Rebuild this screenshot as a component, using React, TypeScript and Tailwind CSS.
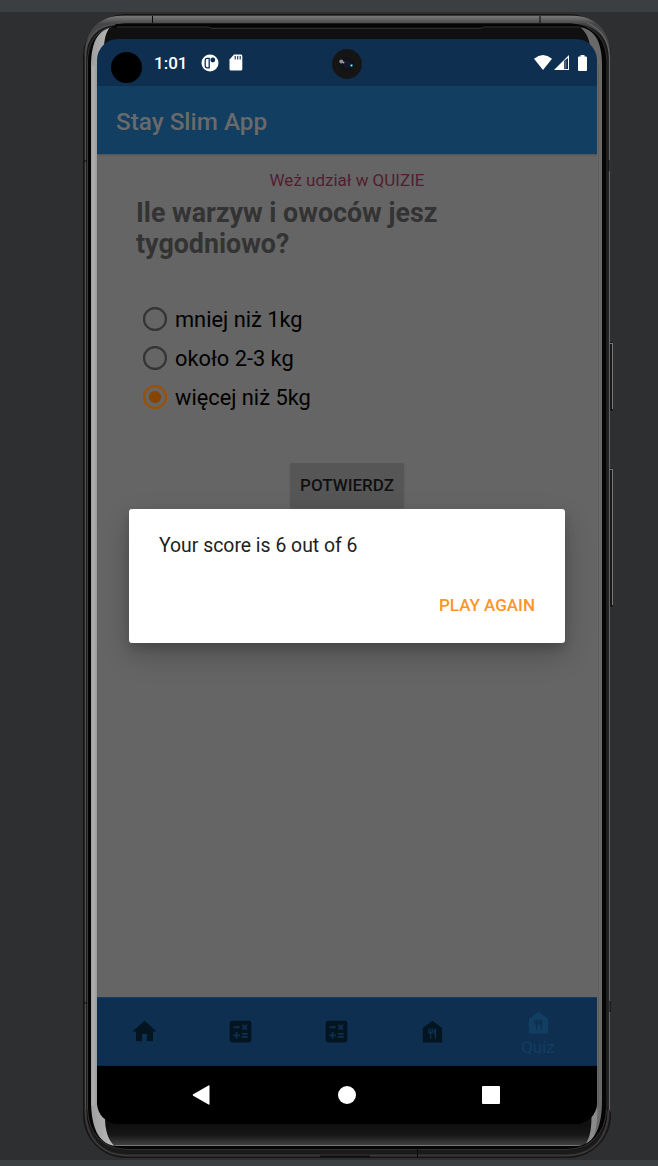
import { MdCalculate, MdFoodBank, MdHome } from "react-icons/md";

const answers = [
  { label: "mniej niż 1kg", selected: false },
  { label: "około 2-3 kg", selected: false },
  { label: "więcej niż 5kg", selected: true },
];

function PhoneFrame() {
  return (
    <svg className="absolute inset-0" width="658" height="1166" viewBox="0 0 658 1166" fill="none" aria-hidden="true">
      <defs>
        <linearGradient id="topMetal" x1="0" y1="14" x2="0" y2="24" gradientUnits="userSpaceOnUse">
          <stop offset="0" stopColor="#2a2625" />
          <stop offset="0.25" stopColor="#757575" />
          <stop offset="1" stopColor="#454545" />
        </linearGradient>
        <linearGradient id="bottomGlass" x1="0" y1="1124" x2="0" y2="1146" gradientUnits="userSpaceOnUse">
          <stop offset="0" stopColor="#0e0e0e" />
          <stop offset="0.5" stopColor="#171717" />
          <stop offset="1" stopColor="#444444" />
        </linearGradient>
        <linearGradient id="leftGlow" x1="91" y1="0" x2="97" y2="0" gradientUnits="userSpaceOnUse">
          <stop offset="0" stopColor="#999999" />
          <stop offset="0.3" stopColor="#b0b0b0" />
          <stop offset="1" stopColor="#9c9c9c" />
        </linearGradient>
        <linearGradient id="cornerShine" x1="91" y1="0" x2="112" y2="0" gradientUnits="userSpaceOnUse">
          <stop offset="0" stopColor="#9f9f9f" />
          <stop offset="1" stopColor="#b8b8b8" />
        </linearGradient>
        <clipPath id="glassEdge">
          <path d="M91 66C91 40 99 27 118 27H575C594 27 602 40 602 66V1100C602 1130 593 1146 575 1146H118C100 1146 91 1130 91 1100Z" />
        </clipPath>
      </defs>

      <rect x="83.5" y="14.5" width="527" height="1143" rx="42" fill="#1b1a1a" stroke="#151313" />
      <path d="M84.5 57C84.5 31 98 15.5 124 15.5H570C597 15.5 610.5 31 610.5 57C606 34 595 23.5 567 23.5H126C99 23.5 88 36 84.5 57Z" fill="url(#topMetal)" />
      <rect x="86.5" y="23.5" width="521" height="1126" rx="38" fill="#050505" />
      <path d="M85.5 1110V58C85.5 38 95 26 115 24.5" stroke="#505050" strokeWidth="1.4" />
      <path d="M87.5 1109V62C87.5 43 97 30 112 27" stroke="#3b3b3b" />
      <path d="M85.5 1110C85.5 1138 101 1155 128 1155.5H566C593 1155 608.5 1138 608.5 1110" stroke="#3a3736" strokeWidth="2" />
      <path d="M87.5 1109C88 1134 103 1149.5 128 1149.5H566C590 1149.5 606 1134 606.5 1109" stroke="#303030" strokeWidth="1.2" />
      <path d="M609.5 1110V58C609 40 602 29 587 23" stroke="#646464" strokeWidth="1.3" />
      <path d="M607 1109V61C606 43 600 33 587 27" stroke="#2c2c2c" strokeWidth="1.3" />
      <path d="M610.5 54V1112" stroke="#303132" />

      <g clipPath="url(#glassEdge)">
        <rect x="91" y="27" width="511" height="1119" fill="#101010" />
        <rect x="91" y="1124" width="511" height="22" fill="url(#bottomGlass)" />
        <path d="M91 1146V27H110C105.5 33 104 40 104 50L97 64V1104L105 1118C105 1130 108 1140 114.5 1146Z" fill="url(#cornerShine)" />
        <rect x="91" y="65" width="6" height="1040" fill="url(#leftGlow)" />
        <path d="M602 1146V27H580C587 33 590 40 590 50L597 64V1104L592 1118C592 1130 590 1140 585 1146Z" fill="#696969" />
        <path d="M591.5 1117C591.5 1130 589.5 1139 584.5 1146L590 1143C595 1137 597 1128 597.5 1108Z" fill="#8a8a8a" />
        <path d="M598.5 65V1105" stroke="#5d5d5d" />
        <path d="M115 1145.5H585" stroke="#777777" />
      </g>
      <path d="M117 27H208C210 27 210 28.5 213 28.5H479C482 28.5 482 27 485 27H580" stroke="#303030" />
      <path d="M152.5 16V23M540 16V23M417.5 1148V1157M84 161H87M609 160V171M84 1003H87M610 1001V1012" stroke="#090909" />
      <path d="M320 1156.5H370" stroke="#111111" strokeWidth="2" />

      <rect x="610" y="342" width="3" height="69" rx="1" fill="#191919" />
      <path d="M612.5 343V409M610 343.5H613" stroke="#777777" />
      <rect x="610" y="468" width="3" height="139" rx="1" fill="#191919" />
      <path d="M612.5 469V605M610 469.5H613" stroke="#777777" />
    </svg>
  );
}

function StatusBar() {
  return (
    <header className="relative flex h-[47px] shrink-0 items-center bg-[#0f2f51] pl-[57px] pr-[10px] text-white">
      <span className="absolute left-[14px] top-[13px] size-[31px] rounded-full bg-black" />
      <span className="w-[47px] pt-px text-[17px] leading-5 font-medium">1:01</span>
      <svg width="18" height="18" viewBox="0 0 18 18">
        <circle cx="9" cy="9" r="8.5" fill="white" />
        <path d="M8.2 4.4H6.2C4.7 4.4 4.2 5.2 4.2 6.5V11.5C4.2 13 5 13.8 6.2 13.8H8.2Z" fill="none" stroke="#0f2f51" strokeWidth="1.3" />
        <circle cx="11.8" cy="6" r="2.4" fill="#0f2f51" />
      </svg>
      <svg className="ml-[10px]" width="14" height="17" viewBox="0 0 14 17">
        <path d="M5 .5H12Q13.3.5 13.3 2V15Q13.3 16.5 12 16.5H2Q.5 16.5.5 15V5.5Z" fill="white" />
        <path d="M6.2 2V5.5M8.7 2V5.5M11.2 2V5.5" stroke="#0f2f51" strokeWidth="1.1" />
      </svg>

      <svg className="absolute left-[235px] top-[10px]" width="30" height="30" viewBox="0 0 30 30">
        <defs>
          <radialGradient id="lens">
            <stop offset="0" stopColor="#1b1a2b" />
            <stop offset="0.4" stopColor="#0c1118" />
            <stop offset="0.5" stopColor="#151515" />
            <stop offset="1" stopColor="#151515" />
          </radialGradient>
        </defs>
        <circle cx="15" cy="15" r="15" fill="url(#lens)" />
        <circle cx="9.3" cy="12.5" r="2" fill="#8c948d" />
        <circle cx="11.5" cy="13.5" r="1" fill="#ad8cbc" />
        <circle cx="19.5" cy="16.5" r="1.4" fill="#2388a5" />
        <circle cx="19.5" cy="16.5" r=".6" fill="#d9ffff" />
      </svg>

      <div className="ml-auto flex items-center gap-[2px]">
        <svg width="18" height="15" viewBox="0 0 18 15">
          <path d="M0 3.7Q9-3.7 18 3.7L9 15Z" fill="white" />
        </svg>
        <svg width="15" height="15" viewBox="0 0 15 15">
          <path d="M15 0V15H0Z" fill="white" />
          <path d="M10.2 5.8L14 3V14H10.2Z" fill="#0f2f51" />
          <path d="M11.8 5.5V13.5" stroke="#70849a" />
        </svg>
        <svg className="ml-[7px]" width="9" height="16" viewBox="0 0 9 16">
          <path d="M2.5 0H6.5V1.5H8Q9 1.5 9 2.5V15Q9 16 8 16H1Q0 16 0 15V2.5Q0 1.5 1 1.5H2.5Z" fill="white" />
        </svg>
      </div>
    </header>
  );
}

function QuizContent() {
  return (
    <main className="flex h-[843px] shrink-0 flex-col bg-[#656565] shadow-[inset_0_2px_2px_-1px_#505050]">
      <p className="mt-[16px] text-center text-[17px] leading-5 text-[#521d30]">Weż udział w QUIZIE</p>
      <h2 className="ml-[39px] mt-[8px] w-[340px] text-[26.8px] leading-[31px] font-bold text-[#333333]">
        Ile warzyw i owoców jesz tygodniowo?
      </h2>
      <div className="ml-[46px] mt-[40px] flex flex-col">
        {answers.map((answer) => (
          <div key={answer.label} className="flex h-[39px] items-center gap-[8px]">
            <svg className="mb-px" width="24" height="24" viewBox="0 0 24 24">
              <circle cx="12" cy="12" r="11" fill="none" strokeWidth="2.3" stroke={answer.selected ? "#995106" : "#353535"} />
              {answer.selected && <circle cx="12" cy="12" r="6.1" fill="#854400" />}
            </svg>
            <span className="pt-px text-[21.8px] leading-6 text-black">{answer.label}</span>
          </div>
        ))}
      </div>
      <button className="mx-auto mt-[46px] h-[45px] w-[114px] rounded-[2px] bg-[#565656] text-[17px] font-medium text-[#101010] shadow-[0_1px_2px_#50505080]">
        POTWIERDZ
      </button>
    </main>
  );
}

function BottomTabs() {
  return (
    <nav className="flex h-[69px] shrink-0 items-center border-y border-t-[#173d60] border-b-[#0b2846] bg-[#0f2f51] text-[29px] text-[#031521]">
      <div className="flex w-[95px] justify-center"><MdHome /></div>
      <div className="flex w-[96px] justify-center"><MdCalculate /></div>
      <div className="flex w-[96px] justify-center"><MdCalculate /></div>
      <div className="flex w-[96px] justify-center"><MdFoodBank /></div>
      <div className="flex w-[116px] flex-col items-center pt-[2px] text-[#123e61]">
        <MdFoodBank />
        <span className="text-[17px] leading-5">Quiz</span>
      </div>
    </nav>
  );
}

function SystemNavigation() {
  return (
    <footer className="flex h-[58px] shrink-0 items-center bg-black pl-[95px] text-white">
      <svg width="18" height="20" viewBox="0 0 18 20"><path d="M16.5.5Q17.5 0 17.5 1.2V18.8Q17.5 20 16.5 19.5L1.2 10.8Q0 10 1.2 9.2Z" fill="white" /></svg>
      <span className="ml-[128px] size-[18px] rounded-full bg-white" />
      <span className="ml-[126px] size-[18px] rounded-[1px] bg-white" />
    </footer>
  );
}

export default function App() {
  return (
    <div className="relative h-[1166px] w-[658px] overflow-hidden border-t-[12px] border-b-[6px] border-t-[#3c3f41] border-b-[#3c3f41] bg-[#2e2f31] font-[Roboto,sans-serif]">
      <div className="absolute -top-[12px] left-0 h-[1166px] w-[658px]"><PhoneFrame /></div>
      <div className="relative ml-[97px] mt-[27px] flex h-[1085px] w-[500px] flex-col overflow-hidden rounded-[21px]">
        <StatusBar />
        <div className="flex h-[68px] shrink-0 items-center bg-[#123e61] pl-[19px] pt-[4px] text-[24.3px] font-medium text-[#6a6a6a]">Stay Slim App</div>
        <QuizContent />
        <BottomTabs />
        <SystemNavigation />
        <section role="dialog" className="absolute left-[32px] top-[470px] flex h-[134px] w-[436px] flex-col rounded-[3px] bg-white px-[30px] pt-[25px] shadow-[0_12px_28px_rgba(0,0,0,0.22),0_5px_10px_rgba(0,0,0,0.14)]">
          <p className="text-[19.4px] leading-6 text-[#212121]">Your score is 6 out of 6</p>
          <button className="mt-[35px] self-end text-[17px] leading-6 font-medium text-[#ff9528]">PLAY AGAIN</button>
        </section>
      </div>
    </div>
  );
}
